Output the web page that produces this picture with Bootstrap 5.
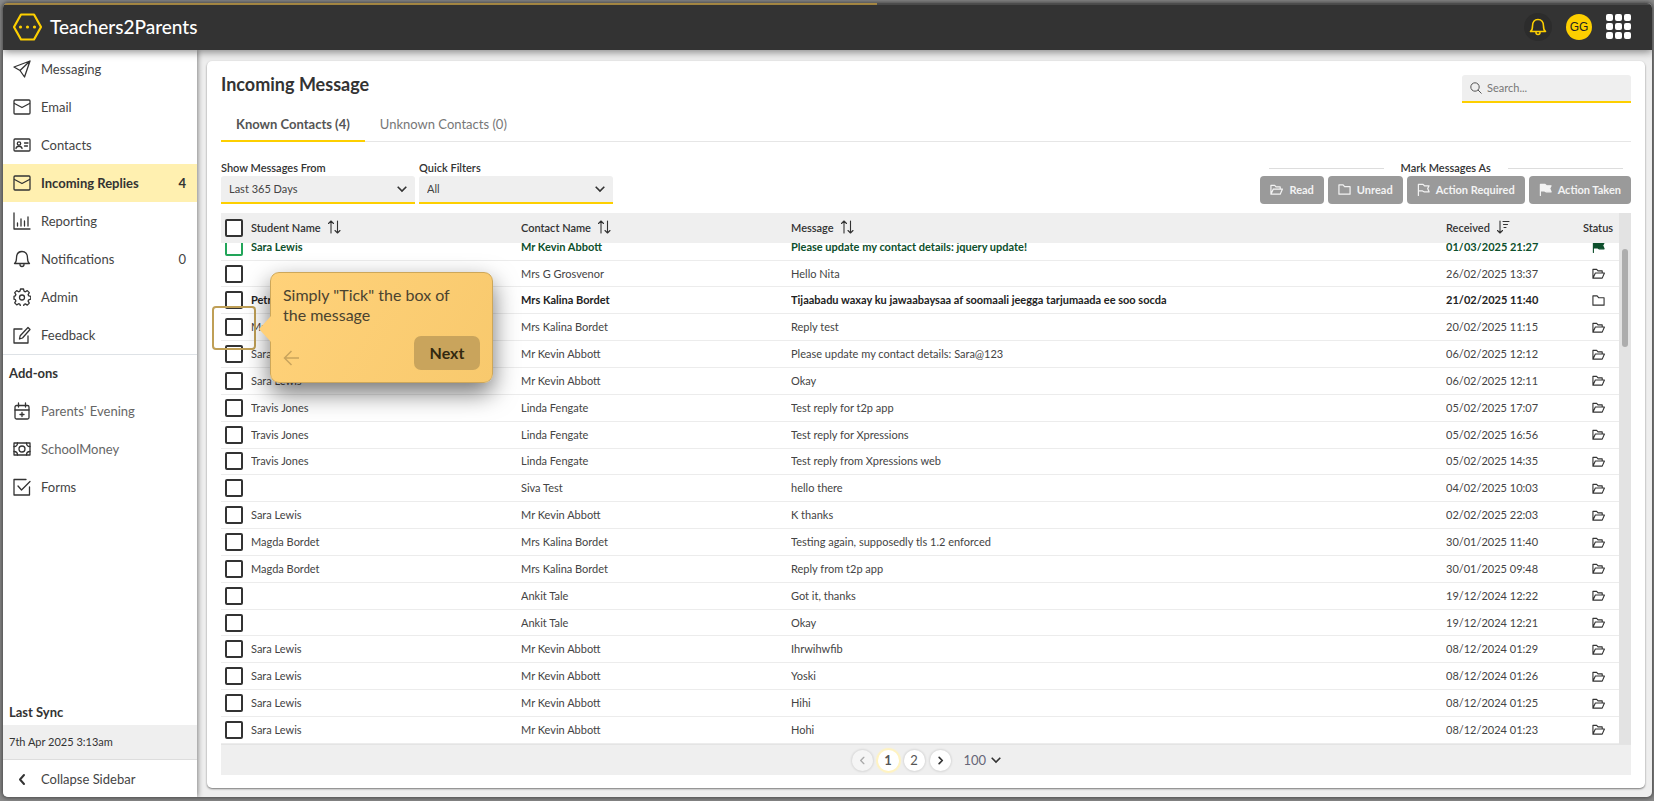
<!DOCTYPE html>
<html lang="en">
<head>
<meta charset="utf-8">
<meta name="viewport" content="width=device-width, initial-scale=1">
<title>Teachers2Parents – Incoming Message</title>
<link href="https://cdn.jsdelivr.net/npm/bootstrap@5.3.0/dist/css/bootstrap.min.css" rel="stylesheet">
<style>
:root{--ink:#333;--gold:#fdcf00;--soft:#efefef}
body{font-family:Lato,"Liberation Sans",sans-serif;font-size:13px;line-height:20px;color:var(--ink);background:#8a8a8a;height:100vh;overflow:hidden;padding:3px 2px 4px 3px}
.app-shell{height:100%;border-radius:5px;background:#eee;box-shadow:0 0 4px 1px #444}
.load-bar{height:2px;background:#555}
.load-bar span{display:block;height:2px;width:53%;background:#b7964a}
.top-bar{height:45px;background:var(--ink);box-shadow:0 2px 8px rgba(0,0,0,.45);z-index:3;padding:0 21px 2px 10px}
.brand-name{font-size:19px;color:#fff;font-weight:500;text-decoration:none;gap:8px}
.top-tools{gap:14px}
.bell-btn,.avatar-btn,.apps-btn{border:0;padding:0;background:none}
.bell-btn{width:28px;height:28px;border-radius:50%;background:#2c2c2c}
.avatar-btn{width:26px;height:26px;border-radius:50%;background:var(--gold);font:12px/26px "Liberation Sans",sans-serif;color:#222}
svg{display:block;flex:none}
.ico{width:18px;height:18px;fill:none;stroke:#333;stroke-width:1.3;stroke-linecap:round;stroke-linejoin:round}
.sort-ico{width:14px;height:14px;stroke-width:1.1}
.side-bar{width:194px;background:#fff;box-shadow:1px 0 5px rgba(0,0,0,.45);z-index:2}
.side-link{height:38px;padding:0 11px 0 10px;gap:10px;color:#444;text-decoration:none}
.side-link.current{background:#fff0b0;font-weight:700;color:var(--ink)}
.side-link.dim{color:#666}
.side-title{font-weight:700;height:38px;line-height:36px;padding-left:6px}
.sync-title{height:26px;line-height:26px}
.sync-time{height:35px;line-height:34px;background:var(--soft);border-bottom:1px solid #ddd;padding-left:6px;font-size:11px}
.collapse-link{height:37px}
.main-panel{margin:11px 7px 9px 10px;padding:14px 14px 13px;background:#fff;border-radius:5px;box-shadow:0 1px 2px rgba(0,0,0,.5)}
h1{font-size:18px;line-height:18px;font-weight:700;margin:0}
.search-box{width:169px;height:28px;background:var(--soft);border-bottom:2px solid var(--gold);border-radius:3px 3px 0 0;padding:0 8px;gap:5px}
.search-box input{border:0;background:none;outline:0;font-size:11px;width:130px;padding:0}
.search-box input::placeholder{color:#777}
.tab-row{border-bottom:1px solid #e6e6e6;height:39px}
.tab-row a{color:#777;text-decoration:none;padding:11px 15px 0;height:39px}
.tab-row a.current{font-weight:700;color:#555;border-bottom:2px solid var(--gold)}
.filter-row{margin-top:18px;height:44px}
.tiny-label{font-size:11px;line-height:16px;font-weight:600;display:block}
.pick{width:194px;height:28px;border:0;border-bottom:2px solid var(--gold);border-radius:3px 3px 0 0;appearance:none;font-size:11px;color:#444;padding:0 8px;background:var(--soft) url("data:image/svg+xml,%3Csvg xmlns='http://www.w3.org/2000/svg' viewBox='0 0 10 10' fill='none' stroke='%23333' stroke-width='1.6'%3E%3Cpath d='M.7 2.700 5 7 9.300 2.700'/%3E%3C/svg%3E") no-repeat right 8px center/10px 10px}
.mark-line{height:1px;background:#ddd;width:115px}
.mark-btn{height:28px;border:0;border-radius:4px;background:#9a9a9a;color:#f3f3f3;font-size:11px;font-weight:700;padding:0 10px 1px;gap:6px}
.mark-btn svg{stroke:#f3f3f3;width:13px;height:13px}
.list-area{margin-top:9px;min-height:0}
.msg-table{width:100%;table-layout:fixed;border-collapse:collapse;font-size:11px;line-height:16px}
.msg-table th,.msg-table td{padding:0;white-space:nowrap;overflow:hidden}
.msg-table th{font-weight:600}
.head-cell{gap:6px}
.head-table{height:30px;background:var(--soft)}
.c-check{width:30px}.c-name{width:270px}.c-date{width:131px}.c-stat{width:42px}
.body-view{min-height:0;overflow:hidden}
.body-table{height:calc(100% + 9px);margin-top:-9px;color:#444}
.body-table tr{border-bottom:1px solid #ececec}
.body-table .strong{font-weight:700;color:#222}
.body-table .done{font-weight:700;color:#0d4f2c}
.tick{appearance:none;display:block;width:18px;height:18px;border:2px solid #333;border-radius:2px;background:#fff;margin:0 0 0 4px}
.done .tick{border-color:#22a559}
.status-ico{width:13px;height:13px;margin:0 auto;stroke-width:1.2}
.scroll-track{width:12px;background:#e3e3e3;padding-top:36px}
.scroll-thumb{width:6px;height:98px;border-radius:3px;background:#adadad;margin:0 auto}
.pager{height:31px;background:var(--soft);border-top:1px solid #e4e4e4;gap:5px}
.page-dot{width:21px;height:21px;line-height:21px;border-radius:50%;border:0;padding:0;background:#fff;color:#555;box-shadow:0 0 2px 1px rgba(0,0,0,.09);font-size:13px}
.page-dot.current{font-weight:700;box-shadow:0 0 1px 2px #fff3c0}
.page-dot:disabled{background:#f5f5f5}
.page-size{border:0;width:37px;margin-left:8px;padding:0;background-color:transparent;background-position:right center;height:24px;font-size:13px;color:#667}
.target-ring{position:absolute;left:212px;top:306px;width:44px;height:44px;border:2px solid #bf9f56;border-radius:4px;z-index:5;pointer-events:none}
.tour-tip{position:absolute;left:270px;top:272px;width:223px;height:111px;z-index:6;border:1px solid #cda75a;border-radius:9px;background:linear-gradient(120deg,#ffd27a,#f8c96d);box-shadow:0 10px 24px rgba(0,0,0,.55);padding:12px;color:#4a4330}
.tour-tip:before{content:"";position:absolute;left:-12px;top:43px;width:12px;height:26px;background:#ffd078;clip-path:polygon(100% 0,0 50%,100% 100%)}
.tour-tip p{font-size:16px;line-height:20px;margin:0;padding-right:20px}
.tour-next{width:66px;height:34px;border:0;border-radius:7px;background:#c9a45c;font-size:16px;font-weight:700;color:#33290f}
</style>
</head>
<body>
<svg class="d-none">
<symbol id="mail" viewBox="0 0 18 18"><rect x="1" y="2" width="16" height="14" rx="1"/><path d="m1.500 5.500 7.500 4 7.500-4"/></symbol>
<symbol id="bell" viewBox="0 0 18 18"><path d="M1.500 13.500h15c-1.600-1-2-2.500-2-5.500 0-4-2-6.500-5.500-6.500S3.500 4 3.500 8c0 3-.4 4.500-2 5.500zM7 14.500a2 2 0 0 0 4 0"/></symbol>
<symbol id="open" viewBox="0 0 14 14"><path d="M1 12V2.500h4l1.500 1.700h4.500v2.300M1 12l2.600-5.500H13.400L11 12z"/></symbol>
<symbol id="shut" viewBox="0 0 14 14"><path d="M1 2h4.500l1.600 2H13v8H1z"/></symbol>
<symbol id="flag" viewBox="0 0 14 14"><path d="M1.500 13.500V1.500h5l1.500 1.500h5l-1.500 3 1.500 3.500H7.500L6 8.500H1.500"/></symbol>
<symbol id="sort" viewBox="0 0 14 14"><path d="M4 13V1M1.500 3.500 4 1l2.500 2.500M10.500 1v12M8 10.500l2.500 2.500 2.500-2.500"/></symbol>
<symbol id="left" viewBox="0 0 10 10"><path d="M6.500 1.500 3 5l3.500 3.500"/></symbol>
<symbol id="right" viewBox="0 0 10 10"><path d="M3.500 1.500 7 5 3.500 8.500"/></symbol>
</svg>
<div class="app-shell d-flex flex-column overflow-hidden">
  <div class="load-bar"><span></span></div>
  <header class="top-bar d-flex align-items-center justify-content-between">
    <a class="brand-name d-flex align-items-center" href="#">
      <svg width="29" height="28" viewBox="0 0 29 28"><path d="M8 1.500h13L28 14 21 26.500H8L1 14z" fill="none" stroke="#fdcf00" stroke-width="2.200" stroke-linejoin="round"/><g fill="#fdcf00"><circle cx="7.500" cy="14" r="1.600"/><circle cx="14.500" cy="14" r="1.600"/><circle cx="21.500" cy="14" r="1.600"/></g></svg>
      Teachers2Parents</a>
    <div class="top-tools d-flex align-items-center">
      <button class="bell-btn d-flex align-items-center justify-content-center" aria-label="Alerts"><svg class="ico" style="stroke:#fdcf00;stroke-width:1.6"><use href="#bell"/></svg></button>
      <button class="avatar-btn">GG</button>
      <button class="apps-btn" aria-label="Apps"><svg width="25" height="26" fill="#fff"><g id="dots"><rect width="7" height="7" rx="2"/><rect x="9" width="7" height="7" rx="2"/><rect x="18" width="7" height="7" rx="2"/></g><use href="#dots" y="9"/><use href="#dots" y="18"/></svg></button>
    </div>
  </header>
  <div class="d-flex flex-grow-1" style="min-height:0">
    <nav class="side-bar d-flex flex-column flex-shrink-0">
      <a href="#" class="side-link d-flex align-items-center"><svg class="ico"><path d="M17 1 1 7l6 3.500L11.500 17zM17 1 7 10.500"/></svg>Messaging</a>
      <a href="#" class="side-link d-flex align-items-center"><svg class="ico"><use href="#mail"/></svg>Email</a>
      <a href="#" class="side-link d-flex align-items-center"><svg class="ico"><rect x="1" y="3" width="16" height="12" rx="1"/><circle cx="6" cy="7.500" r="1.700"/><path d="M3 12.500c.5-3 5.500-3 6 0M11.500 7h3.500M11.500 10h3"/></svg>Contacts</a>
      <a href="#" class="side-link current d-flex align-items-center"><svg class="ico"><use href="#mail"/></svg>Incoming Replies<span class="ms-auto">4</span></a>
      <a href="#" class="side-link d-flex align-items-center"><svg class="ico"><path d="M1 1v16h16M4.500 14v-3M8 14V7M11.500 14V9M15 14V5"/></svg>Reporting</a>
      <a href="#" class="side-link d-flex align-items-center"><svg class="ico"><use href="#bell"/></svg>Notifications<span class="ms-auto">0</span></a>
      <a href="#" class="side-link d-flex align-items-center"><svg class="ico"><path d="M7.500 1h3l.5 2.200 1.300.6 2-1.200 2 2-1.200 2 .6 1.200 2.100.6v2.800l-2.100.6-.6 1.300 1.200 2-2 2-2-1.200-1.300.6-.5 2.200h-3L7 16.300l-1.300-.6-2 1.200-2-2 1.200-2-.6-1.300L1 11.200V8.400l1.300-.6.600-1.200-1.200-2 2-2 2 1.200L7 3.200z"/><circle cx="9" cy="9.500" r="2.500"/></svg>Admin</a>
      <a href="#" class="side-link d-flex align-items-center"><svg class="ico"><path d="M9 3H1v14h14v-7M15 1.500l2 2L9.500 12l-3 1 .7-3.300z"/></svg>Feedback</a>
      <div class="side-title border-top">Add-ons</div>
      <a href="#" class="side-link dim d-flex align-items-center"><svg class="ico"><rect x="2" y="3.500" width="14" height="13.500" rx="1.500"/><path d="M2 8h14M5.500 1v4M12.500 1v4M9 10.500v4M7 12.500h4"/></svg>Parents' Evening</a>
      <a href="#" class="side-link dim d-flex align-items-center"><svg class="ico"><rect x="1" y="3" width="16" height="12"/><circle cx="9" cy="9" r="3"/><path d="M1 6.500C3 6.500 4.500 5 4.500 3M17 6.500c-2 0-3.500-1.500-3.500-3.500M1 11.500c2 0 3.500 1.500 3.500 3.500M17 11.500c-2 0-3.500 1.500-3.500 3.500"/></svg>SchoolMoney</a>
      <a href="#" class="side-link d-flex align-items-center"><svg class="ico"><path d="M13 1.500H1V17h15.500V9M5 8l3.500 4L17 3.500"/></svg>Forms</a>
      <div class="side-title sync-title mt-auto">Last Sync</div>
      <div class="sync-time">7th Apr 2025 3:13am</div>
      <a href="#" class="side-link collapse-link d-flex align-items-center"><svg class="ico" style="stroke-width:2"><path d="m11 5-4 4.500 4 4.500"/></svg>Collapse Sidebar</a>
    </nav>
    <main class="main-panel d-flex flex-column flex-grow-1" style="min-width:0">
      <div class="d-flex justify-content-between align-items-start">
        <h1>Incoming Message</h1>
        <label class="search-box d-flex align-items-center"><svg width="12" height="12" fill="none" stroke="#555"><circle cx="5" cy="5" r="4.200"/><path d="m8 8 3.500 3.500"/></svg><input type="search" placeholder="Search..." aria-label="Search"></label>
      </div>
      <div class="tab-row d-flex"><a href="#" class="current">Known Contacts (4)</a><a href="#">Unknown Contacts (0)</a></div>
      <div class="filter-row d-flex align-items-start gap-1">
        <div><label class="tiny-label" for="from">Show Messages From</label><select class="pick" id="from"><option>Last 365 Days</option></select></div>
        <div><label class="tiny-label" for="quick">Quick Filters</label><select class="pick" id="quick"><option>All</option></select></div>
        <div class="ms-auto">
          <div class="tiny-label d-flex align-items-center justify-content-around"><span class="mark-line"></span>Mark Messages As<span class="mark-line"></span></div>
          <div class="d-flex gap-1">
            <button class="mark-btn d-flex align-items-center"><svg class="ico"><use href="#open"/></svg>Read</button>
            <button class="mark-btn d-flex align-items-center"><svg class="ico"><use href="#shut"/></svg>Unread</button>
            <button class="mark-btn d-flex align-items-center"><svg class="ico"><use href="#flag"/></svg>Action Required</button>
            <button class="mark-btn d-flex align-items-center"><svg class="ico" style="fill:#f3f3f3"><use href="#flag"/></svg>Action Taken</button>
          </div>
        </div>
      </div>
      <div class="list-area d-flex flex-grow-1">
        <div class="d-flex flex-column flex-grow-1" style="min-width:0">
          <table class="msg-table head-table flex-shrink-0">
            <thead><tr><th class="c-check"><input type="checkbox" class="tick" aria-label="Select all"></th>
            <th class="c-name"><span class="head-cell d-flex">Student Name <svg class="ico sort-ico"><use href="#sort"/></svg></span></th>
            <th class="c-name"><span class="head-cell d-flex">Contact Name <svg class="ico sort-ico"><use href="#sort"/></svg></span></th>
            <th><span class="head-cell d-flex">Message <svg class="ico sort-ico"><use href="#sort"/></svg></span></th>
            <th class="c-date"><span class="head-cell d-flex">Received <svg class="ico sort-ico"><path d="M4 1v12M1.500 10.500 4 13l2.500-2.500M7 1.500h6M7.500 4.500h4M8 7.500h2"/></svg></span></th>
            <th class="c-stat text-center">Status</th></tr></thead>
          </table>
          <div class="body-view flex-grow-1">
            <table class="msg-table body-table"><colgroup><col class="c-check"><col class="c-name"><col class="c-name"><col><col class="c-date"><col class="c-stat"></colgroup><tbody id="rows"></tbody></table>
          </div>
        </div>
        <div class="scroll-track flex-shrink-0"><div class="scroll-thumb"></div></div>
      </div>
      <div class="pager d-flex align-items-center justify-content-center">
        <button class="page-dot" disabled aria-label="Previous"><svg class="ico mx-auto" style="width:9px;height:9px;stroke:#aaa;stroke-width:1.5"><use href="#left"/></svg></button>
        <button class="page-dot current">1</button>
        <button class="page-dot">2</button>
        <button class="page-dot" aria-label="Next page"><svg class="ico mx-auto" style="width:9px;height:9px;stroke-width:1.8"><use href="#right"/></svg></button>
        <select class="pick page-size" aria-label="Rows per page"><option>100</option></select>
      </div>
    </main>
  </div>
</div>
<div class="target-ring"></div>
<div class="tour-tip d-flex flex-column justify-content-between" role="dialog" aria-label="Tour">
  <p>Simply "Tick" the box of the message</p>
  <div class="d-flex justify-content-between align-items-end">
    <button class="border-0 bg-transparent p-0 pb-1" aria-label="Back"><svg width="17" height="16" fill="none" stroke="#c9a45c" stroke-width="1.500"><path d="M16 8H1.500M8.500 1 1.500 8l7 7"/></svg></button>
    <button class="tour-next">Next</button>
  </div>
</div>
<script>
const messages = [
 ["Sara Lewis","Mr Kevin Abbott","Please update my contact details: jquery update!","01/03/2025 21:27","flag","done"],
 ["","Mrs G Grosvenor","Hello Nita","26/02/2025 13:37","open"],
 ["Petr Bordet","Mrs Kalina Bordet","Tijaabadu waxay ku jawaabaysaa af soomaali jeegga tarjumaada ee soo socda","21/02/2025 11:40","shut","strong"],
 ["Magda Bordet","Mrs Kalina Bordet","Reply test","20/02/2025 11:15","open"],
 ["Sara Lewis","Mr Kevin Abbott","Please update my contact details: Sara@123","06/02/2025 12:12","open"],
 ["Sara Lewis","Mr Kevin Abbott","Okay","06/02/2025 12:11","open"],
 ["Travis Jones","Linda Fengate","Test reply for t2p app","05/02/2025 17:07","open"],
 ["Travis Jones","Linda Fengate","Test reply for Xpressions","05/02/2025 16:56","open"],
 ["Travis Jones","Linda Fengate","Test reply from Xpressions web","05/02/2025 14:35","open"],
 ["","Siva Test","hello there","04/02/2025 10:03","open"],
 ["Sara Lewis","Mr Kevin Abbott","K thanks","02/02/2025 22:03","open"],
 ["Magda Bordet","Mrs Kalina Bordet","Testing again, supposedly tls 1.2 enforced","30/01/2025 11:40","open"],
 ["Magda Bordet","Mrs Kalina Bordet","Reply from t2p app","30/01/2025 09:48","open"],
 ["","Ankit Tale","Got it, thanks","19/12/2024 12:22","open"],
 ["","Ankit Tale","Okay","19/12/2024 12:21","open"],
 ["Sara Lewis","Mr Kevin Abbott","Ihrwihwfib","08/12/2024 01:29","open"],
 ["Sara Lewis","Mr Kevin Abbott","Yoski","08/12/2024 01:26","open"],
 ["Sara Lewis","Mr Kevin Abbott","Hihi","08/12/2024 01:25","open"],
 ["Sara Lewis","Mr Kevin Abbott","Hohi","08/12/2024 01:23","open"]
];
document.getElementById("rows").innerHTML = messages.map(([student, contact, text, date, icon, kind = ""]) =>
 `<tr class="${kind}"><td><input type="checkbox" class="tick" aria-label="Select message"></td><td>${student}</td><td>${contact}</td><td>${text}</td><td>${date}</td><td><svg class="ico status-ico"${kind === "done" ? ' style="fill:#0d4f2c;stroke:#0d4f2c"' : ""}><use href="#${icon}"/></svg></td></tr>`).join("");
</script>
<script src="https://cdn.jsdelivr.net/npm/bootstrap@5.3.0/dist/js/bootstrap.bundle.min.js"></script>
</body>
</html>
